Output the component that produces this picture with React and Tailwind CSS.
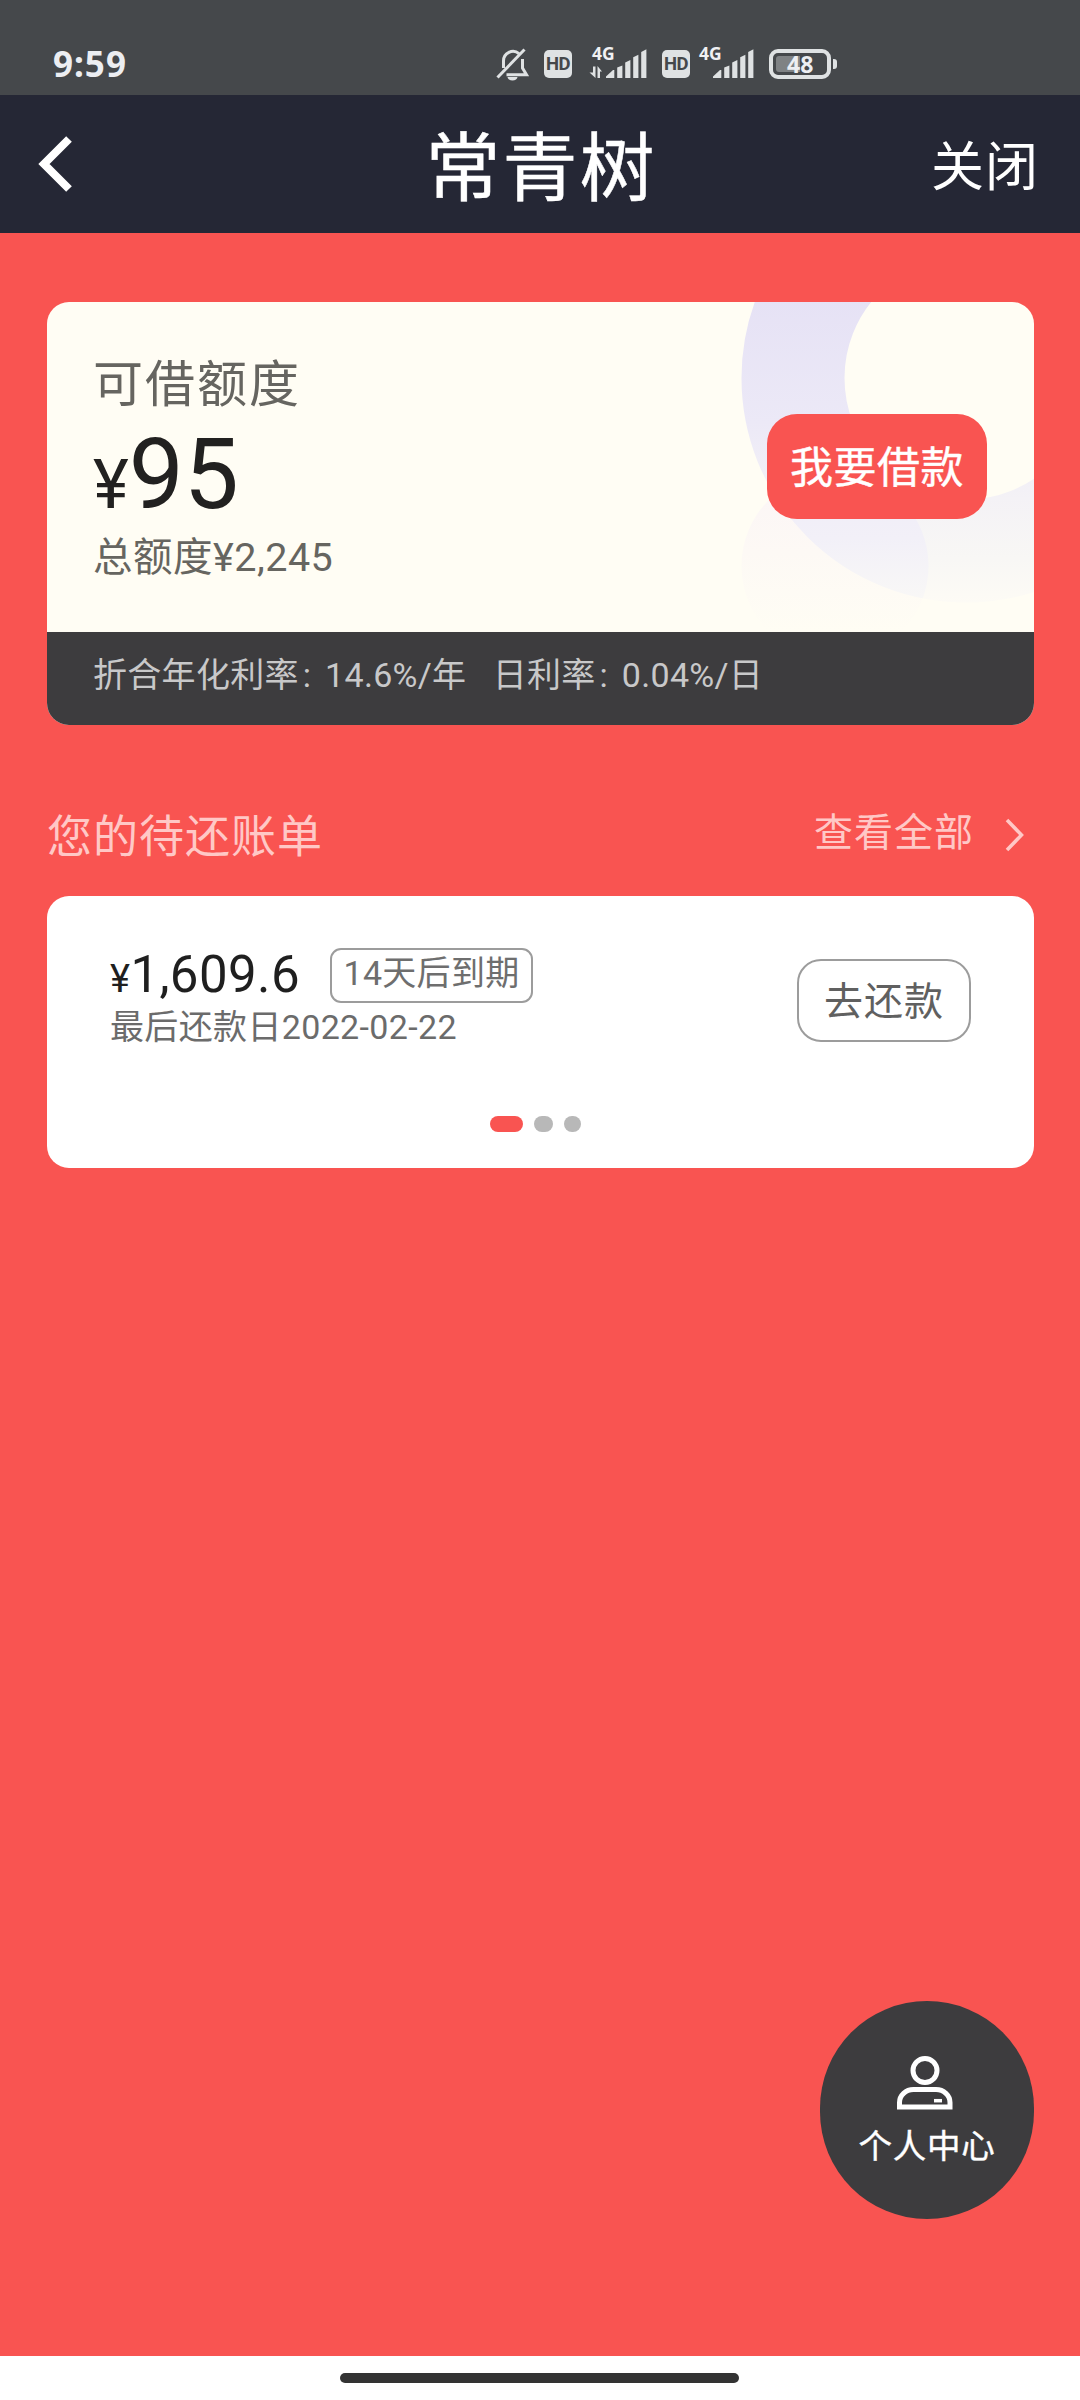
// Left edge, top of the left side, top of the right side
const bars = [
  [28.2, 23.5, 21.5],
  [36.2, 18.5, 16],
  [44.2, 13.2, 10.7],
  [52.2, 8, 5.3],
];

function HdBadge() {
  return (
    <span className="flex h-7 w-7 items-center justify-center rounded-[5px] bg-[#dfe2e3] text-[18.5px] leading-none font-bold tracking-[-0.5px] text-[#45484b]">
      HD
    </span>
  );
}

function Signal({ data }) {
  return (
    <div className="relative h-9 w-[58px] shrink-0">
      <span className="absolute top-[-1px] left-[3px] text-[17.5px] leading-5 font-bold font-['Noto_Sans'] text-[#f0f1f3]">4G</span>
      <svg className="h-9 w-[58px]" viewBox="0 0 58 36" fill="#dfe2e3">
        {data && <path d="M4 22.500h2.500v11.500L0.500 28.500H4zM8.500 34V22l4.500 5.500h-2v6.500z" />}
        <path d="M17 34v-1.500l7-6.500h1.300v8z" />
        {bars.map(([x, left, right]) => (
          <path key={x} d={`M${x} 34V${left}L${x + 5.2} ${right}V34z`} />
        ))}
      </svg>
    </div>
  );
}

function StatusBar() {
  return (
    <div className="flex h-[95px] items-start bg-[#45484b] pt-[44px] pl-[53px] text-[#eceef2]">
      <div className="-mt-px w-[443px] text-[35px] leading-[42px] font-bold tracking-[1px] font-['Noto_Sans']">9:59</div>
      <svg className="mt-[3px] h-[34px] w-[33px]" viewBox="0 0 33 34" fill="none" stroke="#dfe2e3" strokeWidth="3">
        <path d="M7.500 21V14a9.500 9.500 0 0 1 15.500-7.400M26.500 12v9l4 6.800H10.500" />
        <path d="M1.500 30.500 28.500 2.500" />
        <path d="M11.500 30h10a5 3.500 0 0 1-10 0z" fill="#dfe2e3" stroke="none" />
      </svg>
      <div className="mt-[6px] ml-[15px]"><HdBadge /></div>
      <div className="ml-[17px]"><Signal data /></div>
      <div className="mt-[6px] ml-[15px]"><HdBadge /></div>
      <div className="ml-[6px]"><Signal /></div>
      <div className="mt-[5px] ml-[15px] flex items-center gap-[2px]">
        <div className="flex h-[30px] w-[62px] rounded-[9px] border-4 border-[#dfe2e3] p-[3px]">
          <div className="h-4 w-6 rounded-l-[3px] bg-[#7f8284]" />
          <div className="-mt-[3px] -ml-[13px] text-[23px] leading-[22px] font-bold font-['Noto_Sans']">48</div>
        </div>
        <div className="h-[10px] w-1 rounded-r-[3px] bg-[#dfe2e3]" />
      </div>
    </div>
  );
}

function NavBar() {
  return (
    <div className="grid h-[138px] grid-cols-[1fr_auto_1fr] items-center bg-[#252735] pr-[41px] pl-[38px] text-white">
      <svg className="h-[58px] w-[36px]" viewBox="0 0 36 58" fill="none" stroke="currentColor" strokeWidth="8">
        <path d="M31 4 6 29l25 25" />
      </svg>
      <h1 className="pt-[11px] pl-[5px] text-[75px] leading-none tracking-[2px] [-webkit-text-stroke:0.5px]">常青树</h1>
      <button className="justify-self-end pt-[8px] text-[53px] leading-none tracking-[1px]">关闭</button>
    </div>
  );
}

function CreditCard() {
  return (
    <section className="relative h-[423px] overflow-hidden rounded-[22px] bg-[#fffdf4]">
      {/* Decorative rings */}
      <svg className="absolute top-0 right-0 h-[423px] w-[320px]" viewBox="0 0 320 423">
        <defs>
          <linearGradient id="ring" x1="0" y1="0" x2="0" y2="302" gradientUnits="userSpaceOnUse">
            <stop offset="0" stopColor="#e6e2f5" />
            <stop offset="0.4" stopColor="#ece9f7" />
            <stop offset="0.65" stopColor="#f4f2f6" />
            <stop offset="0.85" stopColor="#f8f7f5" />
            <stop offset="1" stopColor="#fdfbf5" />
          </linearGradient>
          <linearGradient id="disc" x1="0" y1="170" x2="0" y2="330" gradientUnits="userSpaceOnUse">
            <stop offset="0" stopColor="#fbf5f6" />
            <stop offset="0.5" stopColor="#fdf9f5" />
            <stop offset="1" stopColor="#fffdf4" />
          </linearGradient>
          <linearGradient id="lens" x1="0" y1="170" x2="0" y2="302" gradientUnits="userSpaceOnUse">
            <stop offset="0" stopColor="#efecf8" />
            <stop offset="0.5" stopColor="#f2f0f8" />
            <stop offset="1" stopColor="#f9f8f6" />
          </linearGradient>
          <clipPath id="disc-clip">
            <circle cx="121" cy="264" r="93.500" />
          </clipPath>
        </defs>
        <circle cx="121" cy="264" r="93.500" fill="url(#disc)" />
        <circle cx="252" cy="76" r="173" fill="none" stroke="url(#ring)" strokeWidth="103" />
        <circle cx="252" cy="76" r="173" fill="none" stroke="url(#lens)" strokeWidth="103" clipPath="url(#disc-clip)" />
      </svg>

      <div className="relative flex h-[330px] justify-between pr-[47px] pl-[46px]">
        <div className="pt-[53px] text-[#666560]">
          <div className="text-[50px] leading-[60px] tracking-[2px]">可借额度</div>
          <div className="mt-[10px] text-[98px] leading-[100px] text-[#222120]">
            <span className="text-[68px] leading-none">¥</span>95
          </div>
          <div className="mt-[8px] text-[39.500px] leading-[50px] tracking-[0.500px]">总额度¥2,245</div>
        </div>
        <button className="mt-[112px] h-[105px] w-[220px] rounded-[30px] bg-[#f95451] pt-[4px] text-[43px] leading-none tracking-[0.500px] text-white [-webkit-text-stroke:0.4px]">
          我要借款
        </button>
      </div>

      <div className="relative h-[93px] bg-[#3d3c3e] pt-[23px] pl-[46px] text-[34px] leading-10 tracking-[0.300px] whitespace-pre text-[#c8c8c9]">
        折合年化利率<span className="mr-[5px] ml-[4px]">:</span> 14.6%/年{'   '}日利率<span className="mr-[5px] ml-[4px]">:</span> 0.04%/日
      </div>
    </section>
  );
}

function BillCard() {
  return (
    <section className="h-[272px] rounded-[22px] bg-white pr-[63px] pl-[63px]">
      <div className="flex h-[220px] justify-between">
        <div className="pt-[48px]">
          <div className="flex h-[60px] items-start">
            <span className="mt-px w-[220px] text-[51px] leading-[60px] tracking-[0.400px] text-[#1f1f1f]">
              <span className="text-[38px] leading-none">¥</span>1,609.6
            </span>
            <span className="mt-1 h-[55px] w-[203px] rounded-[11px] border-2 border-[#9c9c9c] text-center text-[34px] leading-[46px] tracking-[0.300px] text-[#6e6e6e]">
              14天后到期
            </span>
          </div>
          <div className="mt-[3px] text-[34px] leading-10 tracking-[0.350px] text-[#6b6b6b]">最后还款日2022-02-22</div>
        </div>
        <button className="mt-[63px] h-[83px] w-[174px] rounded-[24px] border-2 border-[#9c9c9c] pt-[3px] text-[39px] leading-none tracking-[1px] text-[#606060]">
          去还款
        </button>
      </div>
      <div className="flex gap-[11px] pl-[380px]">
        <span className="h-4 w-[33px] rounded-full bg-[#f95451]" />
        <span className="h-4 w-[19px] rounded-full bg-[#b8b8b8]" />
        <span className="h-4 w-[17px] rounded-full bg-[#b8b8b8]" />
      </div>
    </section>
  );
}

export default function App() {
  return (
    <div className="flex h-[2400px] w-[1080px] flex-col overflow-hidden bg-[#f95451] font-['Roboto','Noto_Sans_CJK_SC',sans-serif]">
      <StatusBar />
      <NavBar />

      <main className="flex flex-1 flex-col pt-[69px] pr-[46px] pl-[47px]">
        <CreditCard />

        <div className="mt-[83px] flex h-[88px] items-start justify-between text-[#ffc8c6]">
          <h2 className="pt-[5px] text-[45px] leading-[50px] tracking-[1px]">您的待还账单</h2>
          <div className="flex pr-[9px]">
            <span className="text-[39px] leading-[50px] tracking-[1px]">查看全部</span>
            <svg className="mt-[9px] ml-[31px] h-[36px] w-[20px]" viewBox="0 0 20 36" fill="none" stroke="currentColor" strokeWidth="3.500">
              <path d="M2 3 16.500 18 2 33" />
            </svg>
          </div>
        </div>

        <BillCard />

        {/* Profile button */}
        <button className="mt-auto mb-[137px] flex h-[218px] w-[214px] flex-col items-center self-end rounded-full bg-[#3d3c3e] text-white">
          <svg className="mt-[54px] mr-[2px] h-[56px] w-[58px]" viewBox="0 0 58 56" fill="none" stroke="currentColor" strokeWidth="5">
            <circle cx="28" cy="15.500" r="12" />
            <path d="M2.500 52V47.500a14 13 0 0 1 14-13H39a14 13 0 0 1 14 13V52z" />
            <path d="M37 45.700h8" strokeWidth="3.500" />
          </svg>
          <span className="mt-[16px] text-[33.500px] leading-10 tracking-[0.800px] [-webkit-text-stroke:0.4px]">个人中心</span>
        </button>
      </main>

      <div className="flex h-11 justify-center bg-white pt-[17px] pr-px">
        <div className="h-[10px] w-[399px] rounded-full bg-[#333]" />
      </div>
    </div>
  );
}
